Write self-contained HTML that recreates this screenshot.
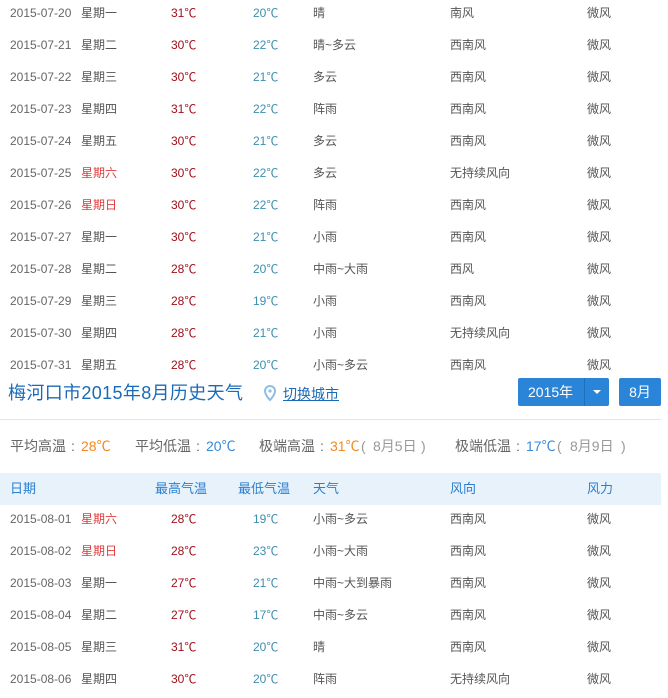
<!DOCTYPE html>
<html><head><meta charset="utf-8"><style>
body{margin:0;width:668px;height:698px;overflow:hidden;background:#fff;font-family:"Liberation Sans","Noto Sans CJK SC",sans-serif;font-size:12px;color:#555;position:relative}
.r{position:absolute;left:0;width:668px;height:32px;line-height:32px}
.r span{position:absolute;top:0;white-space:nowrap}
.c1{left:10px;color:#666}.c2{left:81px}.c3{left:171px;color:#a0101a}.c4{left:253px;color:#3c8fb0}.c5{left:313px}.c6{left:450px}.c7{left:587px}
.w{color:#e03a3a}
.hd{position:absolute;left:0;top:473px;width:661px;height:32px;background:#e8f2fb;line-height:32px;font-size:13px;color:#2a7fd0}
.hd span{position:absolute;top:0}
.st{position:absolute;top:436px;font-size:14px;line-height:20px;color:#666;white-space:nowrap}
.g{color:#999}
</style></head><body>
<div class="r" style="top:-3px"><span class="c1">2015-07-20</span><span class="c2">星期一</span><span class="c3">31℃</span><span class="c4">20℃</span><span class="c5">晴</span><span class="c6">南风</span><span class="c7">微风</span></div>
<div class="r" style="top:29px"><span class="c1">2015-07-21</span><span class="c2">星期二</span><span class="c3">30℃</span><span class="c4">22℃</span><span class="c5">晴~多云</span><span class="c6">西南风</span><span class="c7">微风</span></div>
<div class="r" style="top:61px"><span class="c1">2015-07-22</span><span class="c2">星期三</span><span class="c3">30℃</span><span class="c4">21℃</span><span class="c5">多云</span><span class="c6">西南风</span><span class="c7">微风</span></div>
<div class="r" style="top:93px"><span class="c1">2015-07-23</span><span class="c2">星期四</span><span class="c3">31℃</span><span class="c4">22℃</span><span class="c5">阵雨</span><span class="c6">西南风</span><span class="c7">微风</span></div>
<div class="r" style="top:125px"><span class="c1">2015-07-24</span><span class="c2">星期五</span><span class="c3">30℃</span><span class="c4">21℃</span><span class="c5">多云</span><span class="c6">西南风</span><span class="c7">微风</span></div>
<div class="r" style="top:157px"><span class="c1">2015-07-25</span><span class="c2 w">星期六</span><span class="c3">30℃</span><span class="c4">22℃</span><span class="c5">多云</span><span class="c6">无持续风向</span><span class="c7">微风</span></div>
<div class="r" style="top:189px"><span class="c1">2015-07-26</span><span class="c2 w">星期日</span><span class="c3">30℃</span><span class="c4">22℃</span><span class="c5">阵雨</span><span class="c6">西南风</span><span class="c7">微风</span></div>
<div class="r" style="top:221px"><span class="c1">2015-07-27</span><span class="c2">星期一</span><span class="c3">30℃</span><span class="c4">21℃</span><span class="c5">小雨</span><span class="c6">西南风</span><span class="c7">微风</span></div>
<div class="r" style="top:253px"><span class="c1">2015-07-28</span><span class="c2">星期二</span><span class="c3">28℃</span><span class="c4">20℃</span><span class="c5">中雨~大雨</span><span class="c6">西风</span><span class="c7">微风</span></div>
<div class="r" style="top:285px"><span class="c1">2015-07-29</span><span class="c2">星期三</span><span class="c3">28℃</span><span class="c4">19℃</span><span class="c5">小雨</span><span class="c6">西南风</span><span class="c7">微风</span></div>
<div class="r" style="top:317px"><span class="c1">2015-07-30</span><span class="c2">星期四</span><span class="c3">28℃</span><span class="c4">21℃</span><span class="c5">小雨</span><span class="c6">无持续风向</span><span class="c7">微风</span></div>
<div class="r" style="top:349px"><span class="c1">2015-07-31</span><span class="c2">星期五</span><span class="c3">28℃</span><span class="c4">20℃</span><span class="c5">小雨~多云</span><span class="c6">西南风</span><span class="c7">微风</span></div>

<div style="position:absolute;left:8px;top:381px;font-size:18px;letter-spacing:0.35px;color:#1a6ab8;line-height:24px">梅河口市2015年8月历史天气</div>
<svg style="position:absolute;left:264px;top:385px" width="12" height="17" viewBox="0 0 12 17"><path d="M6 1a5 5 0 0 0-5 5c0 4 5 9 5 9s5-5 5-9a5 5 0 0 0-5-5z" fill="none" stroke="#8fbde6" stroke-width="2"/><circle cx="6" cy="6" r="1.6" fill="#8fbde6"/></svg>
<div style="position:absolute;left:283px;top:384px;font-size:14px;color:#1a6ab8;text-decoration:underline;line-height:20px">切换城市</div>
<div style="position:absolute;left:518px;top:378px;width:91px;height:28px;background:#2a84d8;border-radius:2px;color:#fff;font-size:14px;line-height:28px"><span style="position:absolute;left:10px">2015年</span><div style="position:absolute;left:66px;top:0;width:1px;height:28px;background:#1f6fbf"></div><div style="position:absolute;left:75px;top:12px;width:0;height:0;border-left:4px solid transparent;border-right:4px solid transparent;border-top:4px solid #fff"></div></div>
<div style="position:absolute;left:619px;top:378px;width:42px;height:28px;background:#2a84d8;border-radius:2px;color:#fff;font-size:14px;line-height:28px;text-align:center">8月</div>
<div style="position:absolute;left:0;top:419px;width:661px;height:1px;background:#e5e5e5"></div>
<div class="st" style="left:10px">平均高温</div><div class="st" style="left:71px">:</div><div class="st" style="left:81px;color:#f08a24">28℃</div>
<div class="st" style="left:135px">平均低温</div><div class="st" style="left:196px">:</div><div class="st" style="left:206px;color:#3a8ad6">20℃</div>
<div class="st" style="left:259px">极端高温</div><div class="st" style="left:320px">:</div><div class="st" style="left:330px;color:#f08a24">31℃</div><div class="st g" style="left:361px">(</div><div class="st g" style="left:373px">8月5日</div><div class="st g" style="left:421px">)</div>
<div class="st" style="left:455px">极端低温</div><div class="st" style="left:516px">:</div><div class="st" style="left:526px;color:#3a8ad6">17℃</div><div class="st g" style="left:557px">(</div><div class="st g" style="left:570px">8月9日</div><div class="st g" style="left:621px">)</div>
<div class="hd"><span style="left:10px">日期</span><span style="left:155px">最高气温</span><span style="left:238px">最低气温</span><span style="left:313px">天气</span><span style="left:450px">风向</span><span style="left:587px">风力</span></div>
<div class="r" style="top:503px"><span class="c1">2015-08-01</span><span class="c2 w">星期六</span><span class="c3">28℃</span><span class="c4">19℃</span><span class="c5">小雨~多云</span><span class="c6">西南风</span><span class="c7">微风</span></div>
<div class="r" style="top:535px"><span class="c1">2015-08-02</span><span class="c2 w">星期日</span><span class="c3">28℃</span><span class="c4">23℃</span><span class="c5">小雨~大雨</span><span class="c6">西南风</span><span class="c7">微风</span></div>
<div class="r" style="top:567px"><span class="c1">2015-08-03</span><span class="c2">星期一</span><span class="c3">27℃</span><span class="c4">21℃</span><span class="c5">中雨~大到暴雨</span><span class="c6">西南风</span><span class="c7">微风</span></div>
<div class="r" style="top:599px"><span class="c1">2015-08-04</span><span class="c2">星期二</span><span class="c3">27℃</span><span class="c4">17℃</span><span class="c5">中雨~多云</span><span class="c6">西南风</span><span class="c7">微风</span></div>
<div class="r" style="top:631px"><span class="c1">2015-08-05</span><span class="c2">星期三</span><span class="c3">31℃</span><span class="c4">20℃</span><span class="c5">晴</span><span class="c6">西南风</span><span class="c7">微风</span></div>
<div class="r" style="top:663px"><span class="c1">2015-08-06</span><span class="c2">星期四</span><span class="c3">30℃</span><span class="c4">20℃</span><span class="c5">阵雨</span><span class="c6">无持续风向</span><span class="c7">微风</span></div>
</body></html>
